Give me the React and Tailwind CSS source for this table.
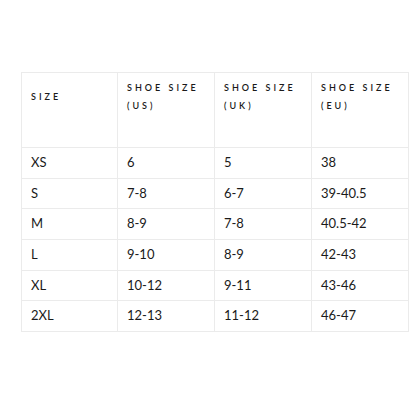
const headers = [
  ['SIZE'],
  ['SHOE SIZE', '(US)'],
  ['SHOE SIZE', '(UK)'],
  ['SHOE SIZE', '(EU)'],
]

const rows = [
  ['XS', '6', '5', '38'],
  ['S', '7-8', '6-7', '39-40.5'],
  ['M', '8-9', '7-8', '40.5-42'],
  ['L', '9-10', '8-9', '42-43'],
  ['XL', '10-12', '9-11', '43-46'],
  ['2XL', '12-13', '11-12', '46-47'],
]

export default function App() {
  return (
    <div className="w-[416px] h-[416px] bg-white pt-[72px] pl-[21px] font-['Lato',sans-serif] text-[#1a1a1a]">
      <div className="grid grid-cols-[96px_97px_97px_97px] w-[388px] border-l border-t border-[#ebebeb]">
        {headers.map((lines, i) => (
          <div
            key={i}
            className="h-[75px] border-r border-b border-[#ebebeb] pl-[9px] pt-[6px] pb-[33px] flex flex-col justify-center text-[9px] leading-[18px] tracking-[3px] font-semibold"
          >
            {lines.map((l) => (
              <div key={l}>{l}</div>
            ))}
          </div>
        ))}
        {rows.map((row) =>
          row.map((cell, j) => (
            <div
              key={row[0] + j}
              className="h-[30.67px] border-r border-b border-[#ebebeb] pl-[9px] flex items-center text-[13px]"
            >
              {cell}
            </div>
          ))
        )}
      </div>
    </div>
  )
}
